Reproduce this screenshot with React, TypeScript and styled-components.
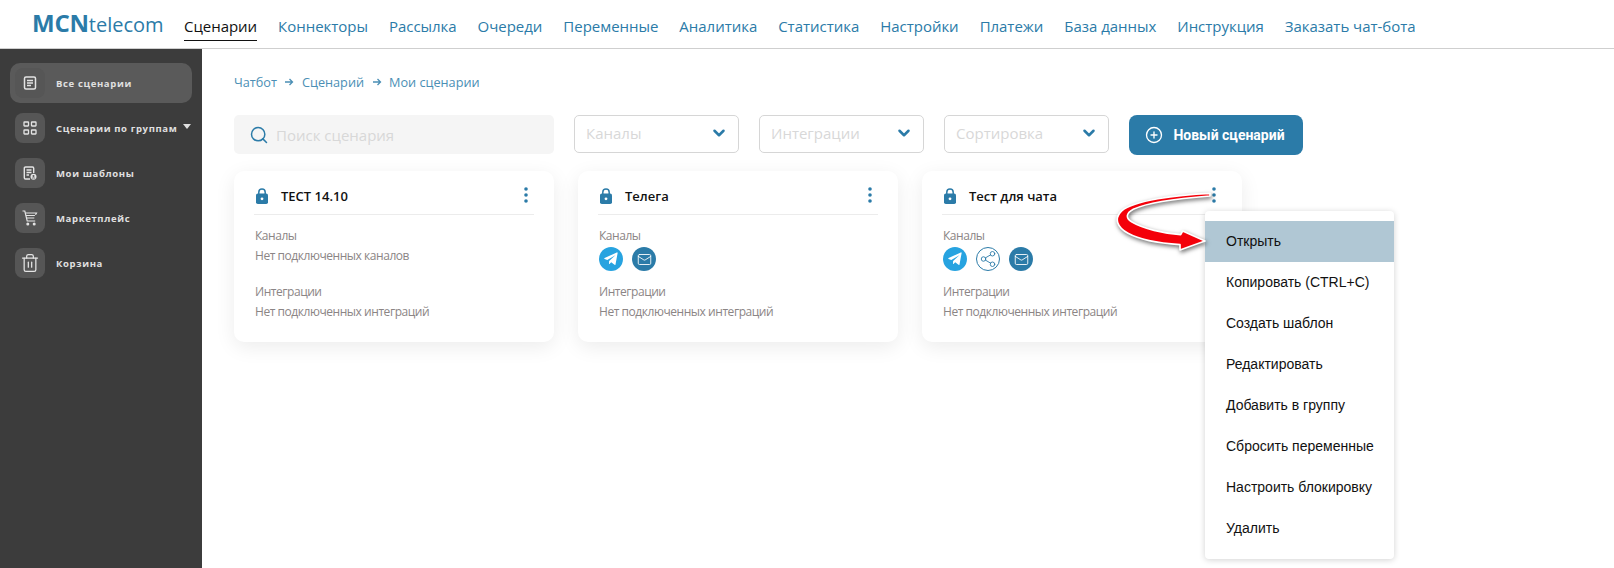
import React from 'react';
import styled, { createGlobalStyle } from 'styled-components';
import { ChevronDown, CirclePlus, Search, Trash2, Mail, Share2 } from 'lucide-react';

const BLUE = '#2b7ba8';

const GlobalStyle = createGlobalStyle`
  html, body {
    margin: 0;
    padding: 0;
    background: #fff;
  }
  body {
    font-family: "Open Sans", "Liberation Sans", sans-serif;
  }
  * {
    box-sizing: border-box;
  }
`;

const Page = styled.div`
  position: relative;
  width: 1614px;
  height: 568px;
  overflow: hidden;
  display: flex;
  flex-direction: column;
`;

const TopBar = styled.header`
  height: 49px;
  flex: none;
  display: flex;
  align-items: flex-start;
  padding-left: 32px;
  border-bottom: 1px solid #cfcfcf;
`;

const Logo = styled.div`
  width: 152px;
  flex: none;
  padding-top: 8px;
  font-size: 20px;
  line-height: 30px;
  color: ${BLUE};
  b {
    font-size: 24px;
    font-weight: 700;
    letter-spacing: -0.2px;
  }
`;

const Nav = styled.nav`
  display: flex;
  gap: 21px;
`;

const NavLink = styled.a<{ $active?: boolean }>`
  display: block;
  height: 41px;
  padding-top: 14px;
  font-size: 15px;
  letter-spacing: -0.03px;
  line-height: 24px;
  white-space: nowrap;
  color: ${(p) => (p.$active ? '#111' : BLUE)};
  border-bottom: 1px solid ${(p) => (p.$active ? '#111' : 'transparent')};
`;

const Content = styled.div`
  flex: 1;
  display: flex;
  min-height: 0;
`;

const Sidebar = styled.aside`
  width: 202px;
  flex: none;
  background: #3c3c3c;
  padding: 14px 10px 0;
  display: flex;
  flex-direction: column;
`;

const SideItem = styled.div<{ $active?: boolean }>`
  display: flex;
  align-items: center;
  gap: 11px;
  height: ${(p) => (p.$active ? '40px' : '30px')};
  padding-left: 5px;
  margin-bottom: ${(p) => (p.$active ? '10px' : '15px')};
  border-radius: 10px;
  background: ${(p) => (p.$active ? '#5a5a5a' : 'transparent')};
`;

const SideIcon = styled.div`
  width: 30px;
  height: 30px;
  flex: none;
  display: flex;
  align-items: center;
  justify-content: center;
  border-radius: 8px;
  background: #565656;
  color: #e4e4e4;
`;

const SideLabel = styled.span`
  font-size: 9.5px;
  font-weight: 700;
  letter-spacing: 0.65px;
  color: #e0e0e0;
  white-space: nowrap;
`;

const Caret = styled.span`
  width: 0;
  height: 0;
  margin-left: -5px;
  margin-top: -3px;
  border-left: 4px solid transparent;
  border-right: 4px solid transparent;
  border-top: 5px solid #e0e0e0;
`;

const Main = styled.main`
  flex: 1;
  padding: 23px 0 0 32px;
`;

const Breadcrumbs = styled.div`
  display: flex;
  align-items: center;
  gap: 7.5px;
  height: 20px;
  font-size: 12.7px;
  line-height: 20px;
  color: #4b8fb5;
`;

const Toolbar = styled.div`
  display: flex;
  align-items: flex-start;
  margin-top: 23px;
`;

const SearchBox = styled.div`
  width: 320px;
  height: 39px;
  display: flex;
  align-items: center;
  gap: 7px;
  padding-left: 15px;
  background: #f5f5f5;
  border-radius: 5px;
  color: ${BLUE};
`;

const Placeholder = styled.span`
  font-size: 15px;
  color: #d8d8d8;
  white-space: nowrap;
`;

const SelectBox = styled.div`
  width: 165px;
  height: 38px;
  margin-left: 20px;
  padding: 0 10px 2px 11px;
  display: flex;
  align-items: center;
  justify-content: space-between;
  border: 1px solid #d6d6d6;
  border-radius: 5px;
  color: ${BLUE};
`;

const NewButton = styled.button`
  width: 174px;
  height: 40px;
  margin-left: 20px;
  padding-right: 8px;
  display: flex;
  align-items: center;
  justify-content: center;
  gap: 10px;
  border: none;
  border-radius: 8px;
  background: ${BLUE};
  color: #fff;
  font-family: Roboto, "Liberation Sans", sans-serif;
  font-size: 14px;
  font-weight: 700;
`;

const CardRow = styled.div`
  display: flex;
  gap: 24px;
  margin-top: 16px;
`;

const Card = styled.section`
  width: 320px;
  height: 171px;
  padding: 0 20px;
  background: #fff;
  border-radius: 10px;
  box-shadow: 0 5px 20px rgba(0, 0, 0, 0.08);
`;

const CardHead = styled.div`
  height: 44px;
  display: flex;
  align-items: center;
  gap: 13px;
  padding: 7px 6px 0 2px;
  border-bottom: 1px solid #ececec;
`;

const CardTitle = styled.h3`
  flex: 1;
  margin: 0;
  font-size: 13px;
  font-weight: 600;
  color: #111;
`;

const Dots = styled.svg`
  margin-top: -2px;
`;

const CardBlock = styled.div<{ $first?: boolean }>`
  height: ${(p) => (p.$first ? '56px' : '40px')};
  margin-top: ${(p) => (p.$first ? '11px' : '0')};
  padding-left: 1px;
  font-size: 12px;
  letter-spacing: -0.45px;
  line-height: 20px;
  color: #8b8585;
`;

const ChannelIcons = styled.div`
  display: flex;
  gap: 9px;
  margin-top: 1px;
`;

const ChannelIcon = styled.span<{ $bg: string; $outlined?: boolean }>`
  width: 24px;
  height: 24px;
  display: flex;
  align-items: center;
  justify-content: center;
  border-radius: 50%;
  background: ${(p) => p.$bg};
  color: ${(p) => (p.$outlined ? BLUE : '#fff')};
  border: ${(p) => (p.$outlined ? `1px solid ${BLUE}` : 'none')};
`;

const ContextMenu = styled.ul`
  position: absolute;
  left: 1205px;
  top: 211px;
  width: 189px;
  margin: 0;
  padding: 10px 0;
  list-style: none;
  background: #fff;
  border-radius: 4px;
  box-shadow: 0 1px 6px rgba(0, 0, 0, 0.18);
`;

const MenuItem = styled.li<{ $active?: boolean }>`
  height: 41px;
  padding: 0 0 2px 21px;
  display: flex;
  align-items: center;
  font-family: "Liberation Sans", Arial, sans-serif;
  font-size: 14px;
  color: #111;
  white-space: nowrap;
  background: ${(p) => (p.$active ? '#b0c7d4' : 'transparent')};
`;

const ArrowOverlay = styled.svg`
  position: absolute;
  left: 1100px;
  top: 170px;
  overflow: visible;
  filter: drop-shadow(1px 2px 2px rgba(0, 0, 0, 0.55));
`;

const NAV_ITEMS = [
  'Сценарии',
  'Коннекторы',
  'Рассылка',
  'Очереди',
  'Переменные',
  'Аналитика',
  'Статистика',
  'Настройки',
  'Платежи',
  'База данных',
  'Инструкция',
  'Заказать чат-бота',
];

const MENU_ITEMS = [
  'Открыть',
  'Копировать (CTRL+C)',
  'Создать шаблон',
  'Редактировать',
  'Добавить в группу',
  'Сбросить переменные',
  'Настроить блокировку',
  'Удалить',
];

const DocIcon = () => (
  <svg width="14" height="14" viewBox="0 0 14 14" fill="none" stroke="currentColor" strokeWidth="1.5">
    <rect x="1.5" y="1" width="11" height="12" rx="1.5" />
    <path d="M4 4.5h6M4 7h6M4 9.5h4" />
  </svg>
);

const GridIcon = () => (
  <svg width="14" height="14" viewBox="0 0 14 14" fill="none" stroke="currentColor" strokeWidth="1.3">
    <rect x="1" y="1" width="4.5" height="4" rx="0.5" />
    <rect x="8.5" y="1" width="4.5" height="4" rx="0.5" />
    <rect x="1" y="9" width="4.5" height="4" rx="0.5" />
    <rect x="8.5" y="9" width="4.5" height="4" rx="0.5" />
  </svg>
);

const TemplateIcon = () => (
  <svg width="14" height="14" viewBox="0 0 14 14" fill="none" stroke="currentColor" strokeWidth="1.4">
    <path d="M7 13H2.500A1.200 1.200 0 0 1 1.300 11.800V2.200A1.200 1.200 0 0 1 2.500 1h7a1.200 1.200 0 0 1 1.200 1.200V7" />
    <path d="M3.500 4h5M3.500 6.500h5M3.500 9h2.500" />
    <circle cx="10.500" cy="10.800" r="3" fill="currentColor" stroke="none" />
    <circle cx="10.500" cy="10" r="1" fill="#565656" stroke="none" />
    <path d="M8.800 12.600c.6-1 2.800-1 3.400 0" stroke="#565656" strokeWidth="0.900" />
  </svg>
);

const CartIcon = () => (
  <svg width="16" height="16" viewBox="0 0 16 16" fill="none" stroke="currentColor" strokeWidth="1.2">
    <path d="M.5 1h2.300l2.400 10h8" />
    <path d="M3.300 3h11.200l-1 1.800M3.900 5.500h9M4.500 8h7.800" />
    <circle cx="5.800" cy="14" r="0.900" fill="currentColor" />
    <circle cx="12.200" cy="14" r="0.900" fill="currentColor" />
  </svg>
);

const LockIcon = () => (
  <svg width="12" height="16" viewBox="0 0 12 16">
    <path d="M2.800 7V4.300a3.200 3.200 0 0 1 6.400 0V7" fill="none" stroke={BLUE} strokeWidth="1.500" />
    <rect x="0" y="5.500" width="12" height="10.500" rx="1.800" fill={BLUE} />
    <circle cx="6" cy="10.800" r="1.400" fill="#fff" />
  </svg>
);

const DotsIcon = () => (
  <Dots width="4" height="16" viewBox="0 0 4 16" fill={BLUE}>
    <circle cx="2" cy="2" r="1.800" />
    <circle cx="2" cy="8" r="1.800" />
    <circle cx="2" cy="14" r="1.800" />
  </Dots>
);

const TelegramIcon = () => (
  <svg width="14" height="14" viewBox="0 0 14 14" fill="#fff">
    <path d="M13.600 1.200 11.500 12.400c-.1.500-.6.700-1 .4L7.200 10.300 5.500 12c-.2.200-.5.100-.5-.2l.1-2.700 6-5.500c.2-.2 0-.3-.2-.2L3.300 8 .6 7.100c-.5-.2-.5-.8 0-1L12.800.4c.5-.2 1 .2.800.8z" />
  </svg>
);

const ArrowIcon = () => (
  <svg width="10" height="10" viewBox="0 0 10 10" fill="none" stroke="#4b8fb5" strokeWidth="1.300">
    <path d="M1 5h7.500M5.500 2l3 3-3 3" />
  </svg>
);

const SIDE_ITEMS = [
  { label: 'Все сценарии', icon: <DocIcon />, active: true },
  { label: 'Сценарии по группам', icon: <GridIcon />, caret: true },
  { label: 'Мои шаблоны', icon: <TemplateIcon /> },
  { label: 'Маркетплейс', icon: <CartIcon /> },
  { label: 'Корзина', icon: <Trash2 size={20} strokeWidth={1.5} /> },
];

const CARDS = [
  { title: 'ТЕСТ 14.10', channels: [] as string[] },
  { title: 'Телега', channels: ['telegram', 'mail'] },
  { title: 'Тест для чата', channels: ['telegram', 'share', 'mail'] },
];

function Channel({ kind }: { kind: string }) {
  if (kind === 'telegram') {
    return (
      <ChannelIcon $bg="#27a3e0">
        <TelegramIcon />
      </ChannelIcon>
    );
  }
  if (kind === 'share') {
    return (
      <ChannelIcon $bg="#fff" $outlined>
        <Share2 size={18} strokeWidth={1.2} />
      </ChannelIcon>
    );
  }
  return (
    <ChannelIcon $bg={BLUE}>
      <Mail size={15} strokeWidth={1.4} />
    </ChannelIcon>
  );
}

export default function App() {
  return (
    <Page>
      <GlobalStyle />
      <TopBar>
        <Logo>
          <b>MCN</b>telecom
        </Logo>
        <Nav>
          {NAV_ITEMS.map((item, i) => (
            <NavLink key={item} $active={i === 0}>
              {item}
            </NavLink>
          ))}
        </Nav>
      </TopBar>

      <Content>
        <Sidebar>
          {SIDE_ITEMS.map((item) => (
            <SideItem key={item.label} $active={item.active}>
              <SideIcon>{item.icon}</SideIcon>
              <SideLabel>{item.label}</SideLabel>
              {item.caret && <Caret />}
            </SideItem>
          ))}
        </Sidebar>

        <Main>
          <Breadcrumbs>
            Чатбот <ArrowIcon /> Сценарий <ArrowIcon /> Мои сценарии
          </Breadcrumbs>

          <Toolbar>
            <SearchBox>
              <Search size={20} strokeWidth={1.8} />
              <Placeholder>Поиск сценария</Placeholder>
            </SearchBox>
            {['Каналы', 'Интеграции', 'Сортировка'].map((name) => (
              <SelectBox key={name}>
                <Placeholder>{name}</Placeholder>
                <ChevronDown size={18} strokeWidth={3.4} />
              </SelectBox>
            ))}
            <NewButton>
              <CirclePlus size={18} strokeWidth={1.8} />
              Новый сценарий
            </NewButton>
          </Toolbar>

          <CardRow>
            {CARDS.map((card) => (
              <Card key={card.title}>
                <CardHead>
                  <LockIcon />
                  <CardTitle>{card.title}</CardTitle>
                  <DotsIcon />
                </CardHead>
                <CardBlock $first>
                  Каналы
                  {card.channels.length > 0 ? (
                    <ChannelIcons>
                      {card.channels.map((c) => (
                        <Channel key={c} kind={c} />
                      ))}
                    </ChannelIcons>
                  ) : (
                    <div>Нет подключенных каналов</div>
                  )}
                </CardBlock>
                <CardBlock>
                  Интеграции
                  <div>Нет подключенных интеграций</div>
                </CardBlock>
              </Card>
            ))}
          </CardRow>
        </Main>
      </Content>

      <ContextMenu>
        {MENU_ITEMS.map((item, i) => (
          <MenuItem key={item} $active={i === 0}>
            {item}
          </MenuItem>
        ))}
      </ContextMenu>

      <ArrowOverlay width="320" height="120" viewBox="0 0 960 360">
        <path
          d="M330 70 C230 74 100 92 66 122 C40 146 52 172 84 190 C120 210 180 220 240 224 L240 240 L315 213 L248 183 L242 194 C190 190 130 176 96 156 C76 144 78 130 100 118 C150 94 250 84 330 78 Z"
          fill="#f4000a"
          stroke="#fff"
          strokeWidth="5"
          strokeLinejoin="round"
        />
      </ArrowOverlay>
    </Page>
  );
}
